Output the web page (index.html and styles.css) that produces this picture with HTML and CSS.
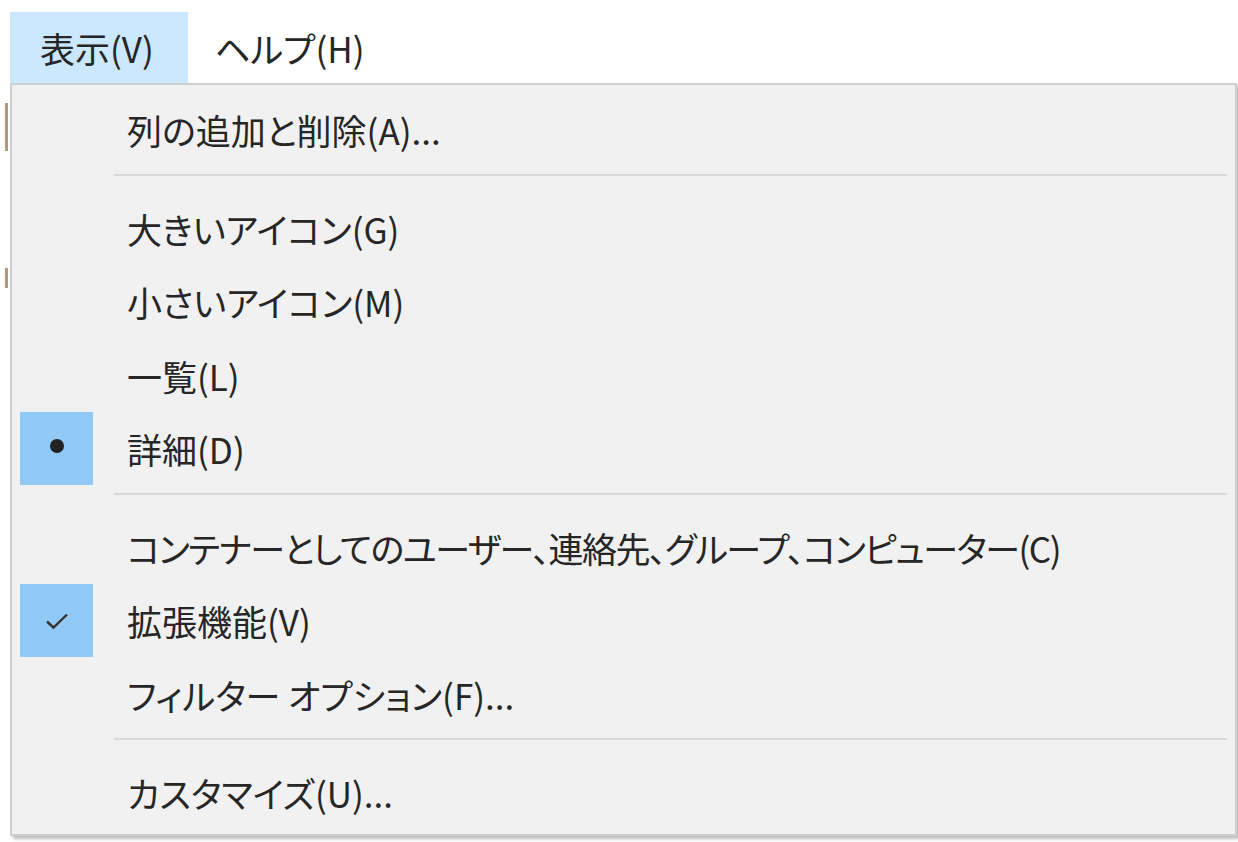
FILE: index.html
```html
<!DOCTYPE html>
<html lang="ja">
<head>
    <meta charset="UTF-8">
    <title>表示メニュー</title>
    <link rel="stylesheet" href="styles.css">
</head>
<body>
    <div class="menubar">
        <div class="menubar-item active">表示(V)</div>
        <div class="menubar-item">ヘルプ(H)</div>
    </div>

    <div class="behind">
        <span class="mark mark-a"></span>
        <span class="mark mark-b"></span>
    </div>

    <div class="menu">
        <div class="item"><span class="icon"></span><span class="label">列の追加と削除(A)...</span></div>
        <div class="sep"></div>
        <div class="item"><span class="icon"></span><span class="label">大きいアイコン(G)</span></div>
        <div class="item"><span class="icon"></span><span class="label">小さいアイコン(M)</span></div>
        <div class="item"><span class="icon"></span><span class="label">一覧(L)</span></div>
        <div class="item"><span class="icon checked"><span class="bullet"></span></span><span class="label">詳細(D)</span></div>
        <div class="sep"></div>
        <div class="item"><span class="icon"></span><span class="label tight">コンテナーとしてのユーザー、連絡先、グループ、コンピューター(C)</span></div>
        <div class="item">
            <span class="icon checked">
                <svg width="26" height="20" viewBox="0 0 26 20"><path d="M3 10.5 L9.5 16.5 L23 3.5" fill="none" stroke="#333" stroke-width="2.4"/></svg>
            </span>
            <span class="label">拡張機能(V)</span>
        </div>
        <div class="item"><span class="icon"></span><span class="label">フィルター オプション(F)...</span></div>
        <div class="sep"></div>
        <div class="item"><span class="icon"></span><span class="label">カスタマイズ(U)...</span></div>
    </div>
</body>
</html>
```

FILE: styles.css
```css
body {
    margin: 0;
    background-color: #fff;
    font-family: "Noto Sans CJK JP", "Noto Sans", sans-serif;
    font-feature-settings: "palt";
    color: #262626;
    font-size: 35px;
    position: relative;
    height: 842px;
    overflow: hidden;
}

.menubar {
    display: flex;
    padding: 12px 0 0 10px;
    height: 83px;
    box-sizing: border-box;
}

.menubar-item {
    height: 71px;
    line-height: 71px;
    padding: 0 26px 0 27px;
    box-sizing: border-box;
}

.menubar-item.active {
    background-color: #cce8ff;
    width: 178px;
    padding-left: 30px;
}

/* bits of the window behind the menu */
.behind {
    position: absolute;
    left: 0;
    top: 83px;
    width: 10px;
    height: 760px;
}

.mark {
    position: absolute;
    left: 5px;
    width: 3px;
    background: #b59a78;
}

.mark-a { top: 20px; height: 48px; }
.mark-b { top: 185px; height: 20px; }

.menu {
    margin-left: 10px;
    width: 1227px;
    height: 753px;
    box-sizing: border-box;
    background-color: #f1f1f1;
    border: 2px solid #cfcfcf;
    box-shadow: 3px 3px 3px rgba(0, 0, 0, 0.25);
    padding-top: 8px;
}

.item {
    display: flex;
    align-items: center;
    height: 73.5px;
}

.icon {
    width: 73px;
    height: 73px;
    margin: 0 34px 0 8px;
    display: flex;
    align-items: center;
    justify-content: center;
}

.icon.checked {
    background-color: #90c8f6;
}

.bullet {
    width: 14px;
    height: 14px;
    border-radius: 50%;
    background: #222;
    margin-top: -6px;
}

.label {
    white-space: nowrap;
}

/* long kana line runs narrower in the original font */
.label.tight {
    letter-spacing: -1.5px;
}

.sep {
    height: 25px;
    padding-top: 7px;
    box-sizing: border-box;
}

.sep::before {
    content: "";
    display: block;
    height: 2px;
    margin: 0 8px 0 102px;
    background: #d9d9d9;
}
```
